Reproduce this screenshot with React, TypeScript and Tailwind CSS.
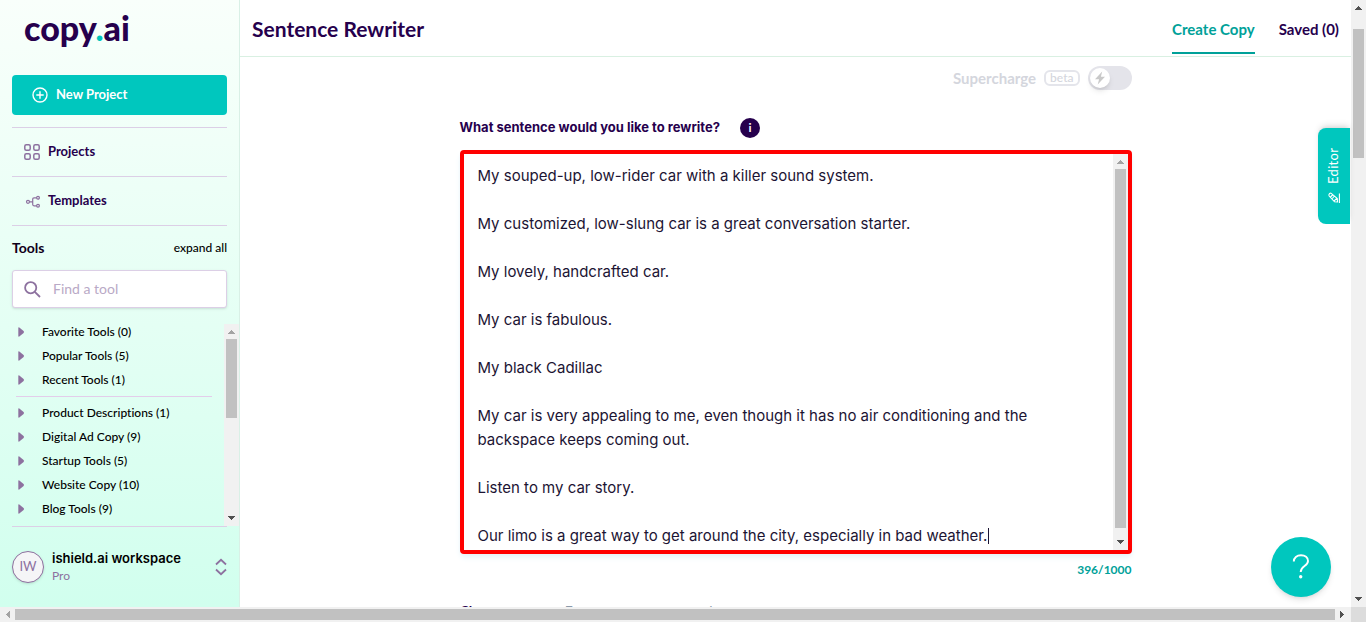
import { useState } from "react";
import type { ReactNode } from "react";

const draft = [
  "My souped-up, low-rider car with a killer sound system.",
  "My customized, low-slung car is a great conversation starter.",
  "My lovely, handcrafted car.",
  "My car is fabulous.",
  "My black Cadillac",
  "My car is very appealing to me, even though it has no air conditioning and the backspace keeps coming out.",
  "Listen to my car story.",
  "Our limo is a great way to get around the city, especially in bad weather.",
].join("\n\n");

const pinnedTools = ["Favorite Tools (0)", "Popular Tools (5)", "Recent Tools (1)"];
const toolGroups = [
  "Product Descriptions (1)",
  "Digital Ad Copy (9)",
  "Startup Tools (5)",
  "Website Copy (10)",
  "Blog Tools (9)",
];

function Arrow({ className }: { className: string }) {
  return (
    <svg viewBox="0 0 15 15" className={`size-[15px] shrink-0 ${className}`} fill="currentColor" aria-hidden="true" shapeRendering="crispEdges">
      <path d="M7 6h1v1h1v1h1v1h1v1H4V9h1V8h1V7h1z" />
    </svg>
  );
}

function VerticalScrollbar({ thumb, top }: { thumb: string; top: string }) {
  return (
    <div className="flex w-[15px] shrink-0 flex-col items-center bg-[#f1f1f1]" aria-hidden="true">
      <Arrow className={top} />
      <div className="flex min-h-0 w-full flex-1 justify-center">
        <div className={`w-[11px] bg-[#c1c1c1] ${thumb}`} />
      </div>
      <Arrow className="rotate-180 text-[#505050]" />
    </div>
  );
}

function ToolRow({ name }: { name: string }) {
  return (
    <li>
      <button type="button" className="flex h-6 w-full items-center gap-4 pl-[17px] text-left text-[12px] font-medium text-black">
        <svg viewBox="0 0 9 10" className="h-[10px] w-[9px] shrink-0" fill="#8d719f" aria-hidden="true">
          <path d="M1.3 0.9Q1.3 0 2.3 0.4L6.6 4.100Q7.400 5 6.600 5.900L2.300 9.600Q1.300 10 1.300 9.100z" />
        </svg>
        {name}
      </button>
    </li>
  );
}

function NavLink({ icon, children }: { icon: ReactNode; children: ReactNode }) {
  return (
    <a href="#" className="flex h-[49px] items-center gap-2 border-b border-[#dccfe6] px-3 text-[13px] font-bold text-[#26004d]">
      {icon}
      {children}
    </a>
  );
}

function Sidebar() {
  return (
    <aside className="flex w-60 shrink-0 flex-col border-r border-[#d9f0e6] bg-linear-to-b from-[#f9fffb] to-[#d1ffee]">
      <div className="px-3">
        <a href="#" className="block h-[75px] pl-3 pt-1 text-[34px] leading-[48px] font-black text-[#26004d]">
          copy<span className="text-[#00c5bd]">.</span>ai
        </a>
        <button type="button" className="flex h-10 w-full items-center gap-2 rounded bg-[#00c7be] px-5 text-[13px] font-bold text-white">
          <svg viewBox="0 0 16 16" className="size-4" fill="none" stroke="currentColor" strokeWidth="1.4" aria-hidden="true">
            <circle cx="8" cy="8" r="7" />
            <path d="M8 4.3v7.4M4.3 8h7.4" />
          </svg>
          New Project
        </button>
        <nav className="mt-3 border-t border-[#dccfe6]">
          <NavLink
            icon={
              <svg viewBox="0 0 16 16" className="size-4" fill="none" stroke="#8d719f" strokeWidth="1.5" aria-hidden="true">
                <rect x="0.8" y="0.8" width="5.4" height="5.4" rx="1.5" />
                <rect x="9.8" y="0.8" width="5.4" height="5.4" rx="1.5" />
                <rect x="0.8" y="9.8" width="5.4" height="5.4" rx="1.5" />
                <rect x="9.8" y="9.8" width="5.4" height="5.4" rx="1.5" />
              </svg>
            }
          >
            Projects
          </NavLink>
          <NavLink
            icon={
              <svg viewBox="0 0 16 16" className="size-4" fill="none" stroke="#8d719f" strokeWidth="1.2" aria-hidden="true">
                <circle cx="4" cy="8.8" r="1.5" />
                <circle cx="14" cy="4.8" r="1.4" />
                <circle cx="14" cy="12.8" r="1.4" />
                <path d="M5.5 8.8h3.2M12.6 4.8H10Q8.7 4.8 8.7 6v5.6q0 1.2 1.3 1.2h2.6" />
              </svg>
            }
          >
            Templates
          </NavLink>
        </nav>
        <div className="flex h-11 items-center justify-between">
          <h2 className="text-[14px] leading-5 font-bold text-[#100019]">Tools</h2>
          <button type="button" className="text-[12px] leading-5 font-medium text-black">expand all</button>
        </div>
        <label className="flex h-[38px] items-center gap-3 rounded-[3px] border border-[#dccfe6] bg-white px-[11px] shadow-sm">
          <svg viewBox="0 0 17 17" className="size-[17px] shrink-0" fill="none" stroke="#8d719f" strokeWidth="1.8" aria-hidden="true">
            <circle cx="6.7" cy="6.7" r="5.6" />
            <path d="M10.8 10.8l5.2 5.2" />
          </svg>
          <input type="search" aria-label="Find a tool" placeholder="Find a tool" className="w-full min-w-0 bg-transparent text-[14px] leading-5 outline-none placeholder:text-[#b9a9c6]" />
        </label>
      </div>
      <div className="mt-4 flex min-h-0 flex-1">
        <div className="min-w-0 flex-1 overflow-hidden pr-3">
          <ul className="-mt-1 mb-1">
            {pinnedTools.map((t) => <ToolRow key={t} name={t} />)}
          </ul>
          <ul className="ml-4 border-t border-[#e3cdea] pt-1 *:-ml-4">
            {toolGroups.map((t) => <ToolRow key={t} name={t} />)}
          </ul>
        </div>
        <VerticalScrollbar top="text-[#a3a3a3]" thumb="h-[79px]" />
      </div>
      <div className="px-3">
        <button type="button" className="flex h-[81px] w-full items-center gap-2 border-t border-[#dccfe6] text-left">
          <span className="flex size-8 items-center justify-center rounded-full border border-[#8d719f] bg-[#f5f5f7] text-[13px] text-[#8d719f] shadow">IW</span>
          <span className="flex-1">
            <span className="block font-['Inter',sans-serif] text-[13px] leading-[18px] font-semibold text-black">ishield.ai workspace</span>
            <span className="block text-[12px] leading-[18px] text-[#8d719f]">Pro</span>
          </span>
          <svg viewBox="0 0 12 18" className="h-[18px] w-3" fill="none" stroke="#8d719f" strokeWidth="1.8" aria-hidden="true">
            <path d="M1 6.5L6 1.8l5 4.7M1 11.5l5 4.7 5-4.7" />
          </svg>
        </button>
      </div>
    </aside>
  );
}

function Header() {
  return (
    <header className="flex h-[57px] shrink-0 items-center justify-between border-b border-[#d9f0e2] px-3">
      <h1 className="pt-[2px] text-[21px] font-bold text-[#26004d]">Sentence Rewriter</h1>
      <nav className="flex h-full gap-6 pb-[2px] text-[15px] font-bold">
        <a href="#" className="flex items-center border-b-2 border-[#00a199] pt-[6px] text-[#00a199]">Create Copy</a>
        <a href="#" className="flex items-center border-b-2 border-transparent pt-[6px] text-[#26004d]">Saved (0)</a>
      </nav>
    </header>
  );
}

export default function App() {
  const [text, setText] = useState(draft);
  return (
    <div className="flex h-screen flex-col overflow-hidden bg-white font-['Lato',sans-serif] [font-variant-ligatures:none]">
      <div className="flex min-h-0 flex-1">
        <div className="relative flex min-w-0 flex-1">
          <Sidebar />
          <main className="flex min-w-0 flex-1 flex-col overflow-hidden">
            <Header />
            <form className="mx-auto w-full max-w-2xl pt-[9px]">
              <label className="flex items-center justify-end gap-2 text-[15px] font-bold text-[#d4d6dd]">
                Supercharge
                <span className="rounded-md border-2 border-[#e4e5eb] px-1 text-[12px] leading-[12px] font-medium">beta</span>
                <input type="checkbox" role="switch" className="peer sr-only" />
                <span className="flex h-6 w-11 items-center rounded-full bg-[#e4e4ea] px-[2px]">
                  <span className="flex size-5 items-center justify-center rounded-full bg-white shadow-md">
                    <svg viewBox="0 0 12 14" className="h-[14px] w-3" fill="#c9c9c9" aria-hidden="true">
                      <path d="M8.2 0.5L1 8.2h4.1L3.7 13.5 11 5.8H6.9z" />
                    </svg>
                  </span>
                </span>
              </label>
              <div className="mt-7 mb-3 flex h-5 items-center gap-5">
                <label htmlFor="sentence" className="font-['Inter',sans-serif] text-[13px] font-bold text-[#26004d]">What sentence would you like to rewrite?</label>
                <button type="button" aria-label="More information" className="size-5 rounded-full bg-[#26004d] text-[12px] leading-5 font-bold text-white">i</button>
              </div>
              <div className="relative flex h-[404px] rounded-[4px] border-4 border-[#ff0000] shadow-md shadow-[#e4f2f8]">
                <textarea
                  id="sentence"
                  value={text}
                  onChange={(e) => setText(e.target.value)}
                  className="min-w-0 flex-1 resize-none overflow-hidden pt-[10px] pr-8 pl-[14px] font-['Inter',sans-serif] text-[15px] leading-6 text-[#1c1433] outline-none"
                />
                <span className="absolute bottom-[6px] left-[524px] h-4 w-px bg-[#1c1433]" />
                <VerticalScrollbar top="text-[#a3a3a3]" thumb="h-[359px]" />
              </div>
              <p className="mt-2 text-right text-[12px] leading-4 font-bold text-[#00a199]">396/1000</p>
              <div className="mt-[23px] flex gap-4 text-[14px] leading-5 font-bold">
                <span className="text-[#26004d]">Choose a tone</span>
                <span className="font-normal text-[#8d9bab]">For some more personal</span>
              </div>
            </form>
          </main>
          <button type="button" className="absolute top-32 right-px flex h-24 w-8 rotate-180 items-center justify-center gap-2 rounded-r-lg bg-[#00c7be] text-[13px] tracking-wide text-white shadow-md [writing-mode:vertical-rl]">
            <svg viewBox="0 0 12 12" className="size-3 -rotate-180" fill="none" stroke="currentColor" strokeWidth="1.1" aria-hidden="true">
              <path d="M1 2.500Q1.500 1 3 1.200L9.300 6.500 9.500 10 6.500 9.800 1.200 4Q0.800 3.200 1 2.500zM2.500 5L5 2.500M6 9L8.800 6.300M4.300 6.500L6.500 4M11.400 1.500v9.500" />
            </svg>
            Editor
          </button>
          <button type="button" aria-label="Help" className="absolute right-5 bottom-[10px] flex size-[60px] items-center justify-center rounded-full bg-[#00c7be] text-white shadow-md">
            <svg viewBox="0 0 18 26" className="h-[26px] w-[18px]" fill="none" stroke="currentColor" strokeWidth="1.9" aria-hidden="true">
              <path d="M1.8 7.5C1.8 3.5 4.8 1.3 9 1.3s7 2.2 7 5.7c0 5.500-7.300 4.700-7.300 11" />
              <circle cx="8.700" cy="22.800" r="1.700" fill="currentColor" stroke="none" />
            </svg>
          </button>
        </div>
        <div className="flex">
          <VerticalScrollbar top="text-[#505050]" thumb="mt-[14px] h-[129px]" />
        </div>
      </div>
      <div className="flex h-[15px] shrink-0 items-center bg-[#f1f1f1]" aria-hidden="true">
        <Arrow className="-rotate-90 text-[#a3a3a3]" />
        <div className="h-[11px] flex-1 bg-[#c1c1c1]" />
        <Arrow className="mr-px rotate-90 text-[#505050]" />
        <div className="size-[15px] bg-[#dcdcdc]" />
      </div>
    </div>
  );
}
